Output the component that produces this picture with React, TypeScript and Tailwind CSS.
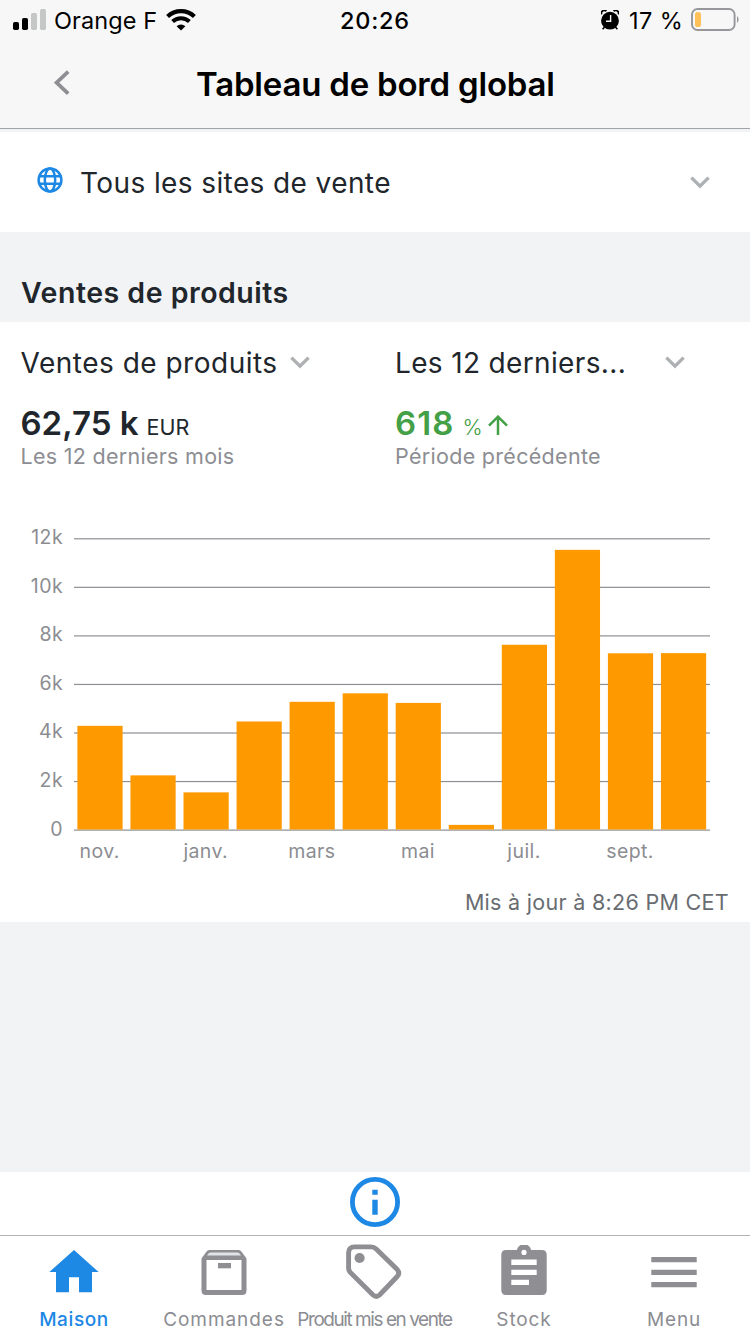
import type { ReactNode } from "react";

const sales = [4270, 2230, 1530, 4450, 5260, 5610, 5215, 190, 7610, 11520, 7260, 7265];
const months = ["nov.", "janv.", "mars", "mai", "juil.", "sept."];
const ticks = ["12k", "10k", "8k", "6k", "4k", "2k", "0"];

function ChevronDown({ className = "" }: { className?: string }) {
  return (
    <svg width="20" height="13" viewBox="0 0 20 13" fill="none" className={`shrink-0 ${className}`}>
      <path d="M1.4 1.6 10 10.2 18.6 1.6" stroke="#aeb1b4" strokeWidth="3.4" />
    </svg>
  );
}

function StatusBar() {
  return (
    <div className="flex h-[41px] items-center text-black">
      <svg width="33" height="21" viewBox="0 0 33 21" className="ml-[13px] mt-[-2px] shrink-0">
        <rect x="0" y="13" width="6" height="8" rx="1.7" />
        <rect x="9" y="9" width="6" height="12" rx="1.7" />
        <rect x="18" y="4" width="6" height="17" rx="1.7" fill="#c5c7c7" />
        <rect x="27" y="0" width="6" height="21" rx="1.7" fill="#c5c7c7" />
      </svg>
      <span className="ml-[8px] w-[112px] text-[23.5px] tracking-[0.1px]">Orange F</span>
      <svg width="30" height="22" viewBox="0 0 30 22" className="mt-[-1px] shrink-0" fill="none" stroke="#000">
        <path d="M1.6 7.6 A19.3 19.3 0 0 1 28.4 7.6" strokeWidth="4.2" />
        <path d="M6.6 12.5 A12.2 12.2 0 0 1 23.4 12.5" strokeWidth="4" />
        <path d="M15 21.6 10.6 17.2 A6.3 6.3 0 0 1 19.4 17.2 Z" fill="#000" stroke="none" />
      </svg>
      <span className="ml-[144px] w-[261px] text-[23.5px] font-medium tracking-[0.75px]">20:26</span>
      <svg width="18" height="20" viewBox="0 0 18 20" className="mt-[-1px] shrink-0">
        <circle cx="9" cy="10.7" r="8.9" />
        <path d="M0.6 4.4 A3 3 0 0 1 5.4 1.1 M12.6 1.1 A3 3 0 0 1 17.4 4.4" fill="none" stroke="#000" strokeWidth="1.8" />
        <path d="M3.6 17 1.6 19.2 M14.4 17 16.4 19.2" stroke="#000" strokeWidth="1.6" />
        <path d="M9.6 5 V11.2 H5" fill="none" stroke="#f7f7f7" strokeWidth="1.4" />
      </svg>
      <span className="ml-[10px] w-[62px] text-[23.5px] tracking-[0.4px]">17 %</span>
      <svg width="50" height="23" viewBox="0 0 50 23" className="mt-[-2px] shrink-0" fill="none">
        <rect x="1" y="1" width="42.6" height="21" rx="5.6" stroke="#97979b" strokeWidth="1.9" />
        <rect x="4" y="4" width="6" height="15" rx="2.6" fill="#ffc058" />
        <path d="M46 8 A4.6 4.6 0 0 1 46 15 Z" fill="#97979b" />
      </svg>
    </div>
  );
}

function SalesChart() {
  const base = 320;
  const step = 48.55;
  return (
    <svg width="750" height="360" viewBox="0 0 750 360" className="block font-[Inter]">
      {ticks.map((t, i) => (
        <g key={t}>
          <rect x="74" y={28.2 + i * step} width="636" height="1.2" fill="#8e8f94" />
          <text x="63" y={34.2 + i * step} textAnchor="end" fontSize="19.5" letterSpacing="0.4" fill="#8c8d92">
            {t}
          </text>
        </g>
      ))}
      {sales.map((v, i) => {
        const h = (v / 2000) * step;
        return <rect key={i} x={77.4 + i * 53.05} y={base - 0.5 - h} width="45.2" height={h} fill="#ff9900" />;
      })}
      {months.map((m, i) => (
        <text key={m} x={99.6 + i * 106.1} y="347.9" textAnchor="middle" fontSize="19.5" letterSpacing="0.4" fill="#8c8d92">
          {m}
        </text>
      ))}
    </svg>
  );
}

function Tab({ label, children, className }: { label: string; children: ReactNode; className: string }) {
  return (
    <div className="flex w-[150px] flex-col items-center">
      <div className="flex h-[68px] items-start justify-center">{children}</div>
      <span className={`flex h-[30px] items-center text-[19px] ${className}`}>{label}</span>
    </div>
  );
}

export default function App() {
  return (
    <div className="flex h-[1334px] w-[750px] flex-col overflow-hidden whitespace-nowrap bg-[#f2f3f5] font-['Inter','Liberation_Sans',sans-serif] leading-none text-[#20262b]">
      <header className="h-[129px] shrink-0 border-b border-[#a2a3a7] bg-[#f7f7f7]">
        <StatusBar />
        <div className="flex h-[87px] items-center text-black">
          <svg width="16" height="26" viewBox="0 0 16 26" fill="none" className="ml-[54px] mt-[-4px]">
            <path d="M14.2 1.6 2.6 12.6 14.2 23.6" stroke="#8e8e93" strokeWidth="3.7" />
          </svg>
          <h1 className="ml-[126px] text-[33px] font-semibold tracking-[-0.2px]">Tableau de bord global</h1>
        </div>
      </header>

      <button className="mt-[3px] flex h-[100px] shrink-0 items-center bg-white pl-[37px] pr-[40px] text-left">
        <svg width="26" height="26" viewBox="0 0 26 26" fill="none" stroke="#1e88e5" strokeWidth="2.5" className="mt-[-4px]">
          <circle cx="13" cy="13" r="11.4" />
          <ellipse cx="13" cy="13" rx="5.2" ry="11.4" />
          <path d="M2.5 9.2 H23.5 M2.5 16.8 H23.5" />
        </svg>
        <span className="ml-[17px] grow pt-[2px] text-[28px] tracking-[0.4px]">Tous les sites de vente</span>
        <ChevronDown />
      </button>

      <h2 className="flex h-[90px] shrink-0 items-center pl-[21px] pt-[32px] text-[28.5px] font-semibold tracking-[0.5px]">Ventes de produits</h2>

      <main className="h-[600px] shrink-0 bg-white">
        <div className="grid h-[188px] grid-cols-2 pt-[21px]">
          <section className="pl-[20.5px]">
            <div className="flex h-[40px] items-center">
              <span className="w-[269.5px] text-[28px] tracking-[0.5px]">Ventes de produits</span>
              <ChevronDown className="mt-[-1px]" />
            </div>
            <div className="mt-[24px] flex h-[34px] items-baseline">
              <span className="text-[33px] font-semibold">62,75 k</span>
              <span className="ml-[8px] text-[21.5px]">EUR</span>
            </div>
            <div className="mt-[5px] text-[21.5px] tracking-[0.28px] text-[#8c8d92]">Les 12 derniers mois</div>
          </section>
          <section className="pl-[20px]">
            <div className="flex h-[40px] items-center">
              <span className="w-[270px] text-[28px] tracking-[0.35px]">Les 12 derniers...</span>
              <ChevronDown className="mt-[-1px]" />
            </div>
            <div className="mt-[24px] flex h-[34px] items-baseline text-[#43a047]">
              <span className="text-[33px] font-semibold tracking-[1.1px]">618</span>
              <span className="ml-[8px] text-[21.5px] font-light">%</span>
              <svg width="20" height="20" viewBox="0 0 20 20" fill="none" stroke="currentColor" strokeWidth="2.5" className="ml-[5px] mb-[-1px]">
                <path d="M10 20 V2 M1 10.7 10 1.7 19 10.7" />
              </svg>
            </div>
            <div className="mt-[5px] text-[21.5px] tracking-[0.3px] text-[#8c8d92]">Période précédente</div>
          </section>
        </div>
        <SalesChart />
        <div className="flex h-[40px] items-center justify-end pr-[21px] pt-[25px] text-[21.5px] tracking-[0.3px] text-[#686c71]">
          <span>Mis à jour à 8:26 PM CET</span>
        </div>
      </main>

      <div className="mt-auto flex h-[63px] shrink-0 items-center justify-center bg-white">
        <svg width="50" height="50" viewBox="0 0 50 50" fill="none" className="mt-[-3px]">
          <circle cx="25" cy="25" r="22.6" stroke="#1e88e5" strokeWidth="4.8" />
          <path d="M22.3 12.7 h5.4 v5 h-5.4z M22.3 22.7 h5.4 v15 h-5.4z" fill="#1e88e5" />
        </svg>
      </div>

      <nav className="flex h-[99px] shrink-0 border-t border-[#b2b2b5] bg-white text-[#8c8d92]">
        <Tab label="Maison" className="font-medium tracking-[0.6px] text-[#1e88e5] pr-[2px]">
          <svg width="50" height="43" viewBox="0 0 50 43" fill="#1e88e5" className="mr-[2px] mt-[14px]">
            <path d="M25 0 49.6 22 H43 V42.3 H30 V27.3 H20 V42.3 H7 V22 H0.4Z" />
          </svg>
        </Tab>
        <Tab label="Commandes" className="tracking-[0.95px] pr-[2px]">
          <svg width="46" height="46" viewBox="0 0 46 46" fill="none" className="mr-[2px] mt-[14px]">
            <path d="M0.5 8.5 5.2 1.9 Q6.5 0 8.5 0 H37.5 Q39.5 0 40.8 1.9 L45.5 8.5 V40.5 Q45.5 45 41 45 H5 Q0.5 45 0.5 40.5Z" fill="#8e8e93" />
            <path d="M6 5.4 Q7.5 2.5 9.5 2.5 H36.5 Q38.5 2.5 40 5.4Z" fill="#e1e4e6" />
            <path d="M5.5 10 H40.5 V40 H5.5Z" fill="#fff" />
            <path d="M17 13 H30 V18.3 H17Z" fill="#8e8e93" />
          </svg>
        </Tab>
        <Tab label="Produit mis en vente" className="tracking-[-1.45px] pr-[1px]">
          <svg width="56" height="56" viewBox="0 0 56 56" fill="none" className="mr-[2px] mt-[8px]">
            <path d="M8.5 2.9 H25 Q28 2.9 30.2 5 L51.2 25.5 Q54.3 29 51.2 32.5 L33.8 50.8 Q30.3 54 26.8 50.8 L4.3 28.4 Q2.6 26.5 2.6 24 V8.8 Q2.6 2.9 8.5 2.9Z" stroke="#8e8e93" strokeWidth="4.9" />
            <circle cx="13.6" cy="14" r="5.1" fill="#8e8e93" />
          </svg>
        </Tab>
        <Tab label="Stock" className="tracking-[0.9px] pr-[2px]">
          <svg width="46" height="50" viewBox="0 0 46 50" className="mr-[2px] mt-[9px]">
            <path fill="#8e8e93" fillRule="evenodd" d="M5 5 H15.8 A7.4 7.4 0 0 1 30.2 5 H41 Q45.7 5 45.7 9.7 V45.3 Q45.7 50 41 50 H5 Q0.3 50 0.3 45.3 V9.7 Q0.3 5 5 5Z M23 4.8 A2.6 2.6 0 1 0 23 10 A2.6 2.6 0 1 0 23 4.8Z M10.3 14.5 V20 H35.7 V14.5Z M10.3 24.7 V30 H35.7 V24.7Z M10.3 34.7 V40 H28 V34.7Z" />
          </svg>
        </Tab>
        <Tab label="Menu" className="tracking-[0.8px] pr-[2px]">
          <svg width="46" height="31" viewBox="0 0 46 31" fill="#8e8e93" className="mr-[2px] mt-[21px]">
            <path d="M0.3 0 H45.7 V5.2 H0.3Z M0.3 12.7 H45.7 V17.9 H0.3Z M0.3 25 H45.7 V30.2 H0.3Z" />
          </svg>
        </Tab>
      </nav>
    </div>
  );
}
